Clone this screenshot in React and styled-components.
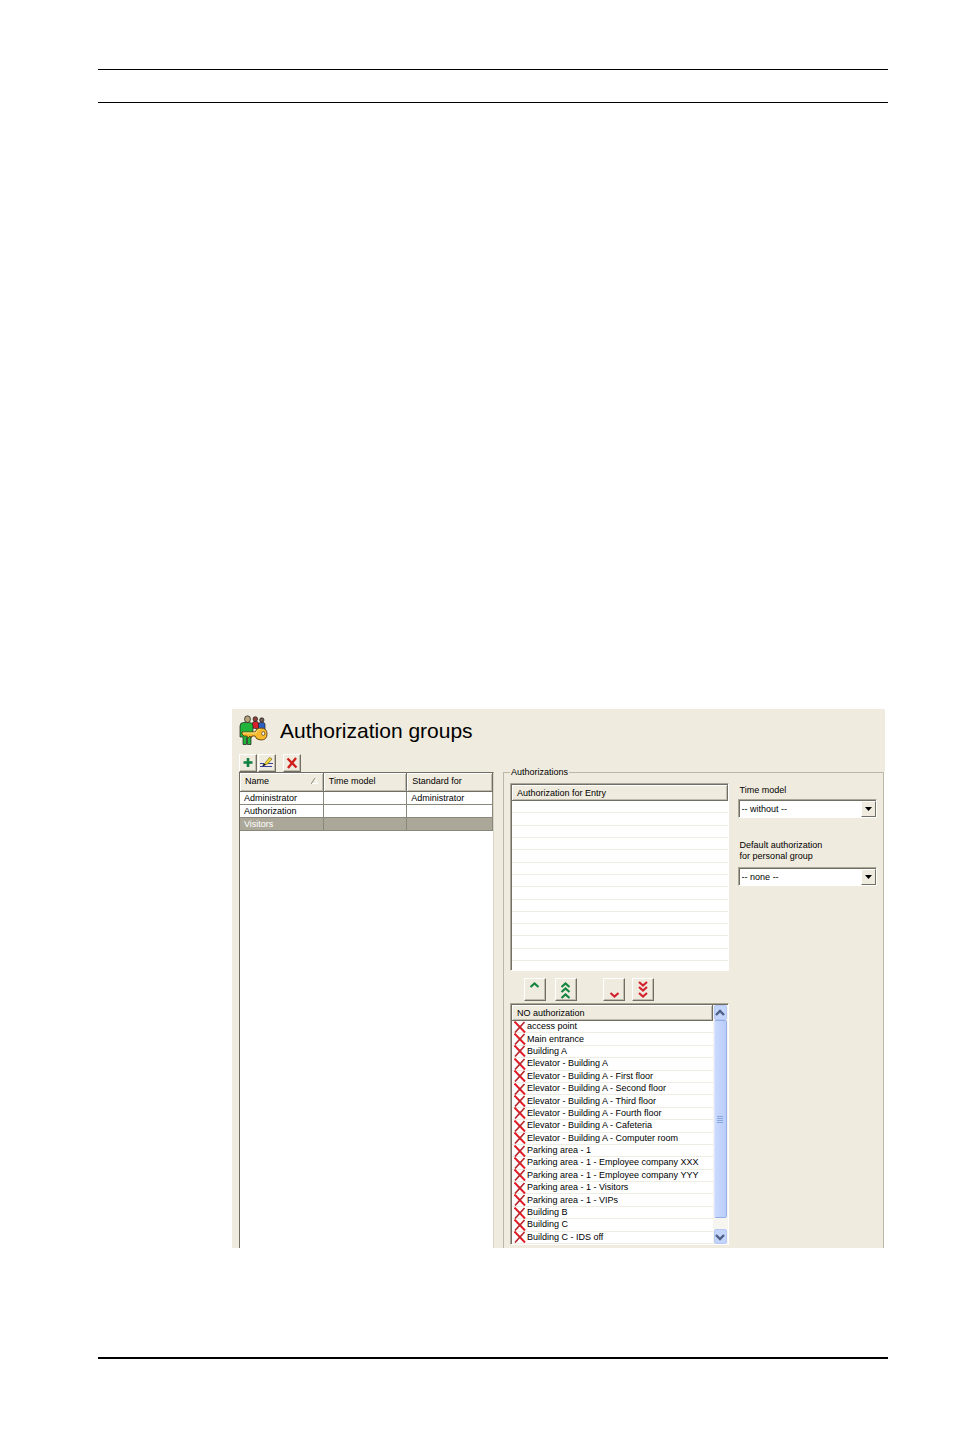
import React, { useState } from "react";
import styled, { createGlobalStyle } from "styled-components";

const GlobalStyle = createGlobalStyle`
  * {
    box-sizing: border-box;
  }
  body {
    margin: 0;
    background: #fff;
    color: #000;
    font-family: "Liberation Sans", Arial, sans-serif;
    font-size: 9px;
    line-height: 12px;
  }
  button, select {
    font: inherit;
    color: inherit;
  }
`;

const Page = styled.div`
  display: flex;
  flex-direction: column;
  min-height: 100vh;
  padding: 69px 66px 71px 98px;
`;

const PageHeader = styled.header`
  height: 34px;
  border-top: 1px solid #000;
  border-bottom: 1px solid #000;
`;

const PageFooter = styled.footer`
  border-top: 2px solid #000;
`;

const Main = styled.main`
  flex: 1;
  display: flex;
  flex-direction: column;
  justify-content: flex-end;
  padding: 0 3px 109px 134px;
`;

const Dialog = styled.section`
  background: #efebde;
  padding: 6px 1px 0 7px;
`;

const TitleBar = styled.div`
  display: flex;
  align-items: center;
  gap: 11px;
  height: 31px;
  margin-bottom: 8px;
`;

const Title = styled.h1`
  margin: 0;
  font-size: 21px;
  font-weight: normal;
  line-height: 28px;
`;

const Columns = styled.div`
  display: grid;
  grid-template-columns: 255fr 381fr;
  gap: 9px;
`;

const GroupsColumn = styled.div`
  min-width: 0;
  display: flex;
  flex-direction: column;
`;

const Toolbar = styled.div`
  display: flex;
  gap: 1px;
`;

const Button = styled.button`
  display: flex;
  align-items: center;
  justify-content: center;
  width: ${(p) => (p.$large ? 22 : 18)}px;
  height: ${(p) => (p.$large ? 23 : 18)}px;
  margin-left: ${(p) => p.$before || 0}px;
  padding: 0;
  border: 1px solid;
  border-color: #fff #716f64 #716f64 #fff;
  box-shadow: inset -1px -1px #bfbbad;
  background: #efebde;
`;

const Sunken = styled.div`
  background: #fff;
  border: 1px solid;
  border-color: #aca899 #fff #fff #aca899;
  box-shadow: inset 1px 1px #716f64;
  padding: 1px 0 0 1px;
`;

const GroupsFrame = styled.div`
  flex: 1;
  background: #fff;
  border: 1px solid #716f64;
  border-right-color: #d8d4c6;
  border-bottom: 0;
`;

const Table = styled.table`
  width: 100%;
  border-collapse: collapse;
  table-layout: fixed;
`;

const Th = styled.th`
  width: ${(p) => p.$width || "auto"};
  height: 18px;
  padding: 0 5px 2px;
  background: #efebde;
  border-right: 1px solid #716f64;
  border-bottom: 1px solid #716f64;
  box-shadow: inset 1px 1px #fff, inset -1px -1px #bfbbad;
  font-weight: normal;
  text-align: left;

  div {
    display: flex;
    align-items: center;
    justify-content: space-between;
  }
`;

const Tr = styled.tr`
  background: ${(p) => (p.$selected ? "#aca899" : "#fff")};
  color: ${(p) => (p.$selected ? "#fff" : "#000")};
`;

const Td = styled.td`
  height: 13px;
  padding: 0 4px;
  border-right: 1px solid #8a877b;
  border-bottom: 1px solid #8a877b;
`;

const Fieldset = styled.fieldset`
  min-width: 0;
  margin: 12px 0 0;
  padding: 5px 6px 3px;
  border: 1px solid #bab6a8;
  border-bottom: 0;
  box-shadow: 1px 0 #fff;
`;

const Legend = styled.legend`
  padding: 0 1px;
`;

const FieldsetBody = styled.div`
  display: grid;
  grid-template-columns: 218fr 139fr;
  gap: 9px;
`;

const Lists = styled.div`
  min-width: 0;
`;

const Options = styled.div`
  min-width: 0;
  padding-top: 2px;
`;

const ListBox = styled(Sunken)`
  display: flex;
  height: ${(p) => p.$height}px;
`;

const ListContent = styled.div`
  flex: 1;
  min-width: 0;
  display: flex;
  flex-direction: column;
`;

const ListHeader = styled.div`
  flex: none;
  height: 16px;
  padding: 2px 5px 0;
  background: #efebde;
  border-right: 1px solid #716f64;
  border-bottom: 1px solid #716f64;
  box-shadow: inset 1px 1px #fff, inset -1px -1px #bfbbad;
`;

const Items = styled.ul`
  flex: 1;
  min-height: 0;
  display: flex;
  flex-direction: column;
  margin: 0;
  padding: 0 0 ${(p) => p.$rest || 0}px;
  list-style: none;
`;

const Item = styled.li`
  flex: 1;
  min-height: 0;
  display: flex;
  align-items: center;
  gap: 1px;
  padding-left: 2px;
  border-bottom: 1px solid #efece3;
  line-height: 11px;
  white-space: nowrap;

  svg {
    flex: none;
  }
`;

const MoveButtons = styled.div`
  display: flex;
  padding: 7px 0 2px 14px;
`;

const Scrollbar = styled.div`
  width: 15px;
  display: flex;
  flex-direction: column;
  background: #f6f5f0;
  padding: 0 1px;
`;

const ScrollButton = styled.button`
  display: flex;
  align-items: center;
  justify-content: center;
  height: 15px;
  padding: 0;
  border: 1px solid #b4c8f4;
  border-radius: 2px;
  background: #c4d5fd;
`;

const Thumb = styled.div`
  flex: 1;
  display: flex;
  align-items: center;
  justify-content: center;
  margin-bottom: 11px;
  border: 1px solid #94aee8;
  border-left-color: #dbe5fe;
  border-radius: 2px;
  background: linear-gradient(to right, #cbdafe, #b9ccfa);
`;

const Field = styled.div`
  margin-bottom: ${(p) => p.$after || 0}px;
`;

const Label = styled.label`
  display: block;
  padding: 0 2px;
  margin-bottom: ${(p) => p.$gap}px;
  line-height: 11px;
`;

const SelectBox = styled(Sunken)`
  position: relative;
  height: 19px;
`;

const Select = styled.select`
  appearance: none;
  display: block;
  width: 100%;
  height: 16px;
  padding: 0 18px 0 2px;
  border: 0;
  border-radius: 0;
  background: #fff;
`;

const Arrow = styled.span`
  position: absolute;
  top: 1px;
  right: 0;
  bottom: 0;
  width: 15px;
  display: flex;
  align-items: center;
  justify-content: center;
  background: #efebde;
  border: 1px solid;
  border-color: #fff #716f64 #716f64 #fff;
  pointer-events: none;
`;

const GroupIcon = () => (
  <svg width="30" height="31" viewBox="0 0 30 31" aria-hidden="true">
    <g stroke="#1d1d1d" strokeWidth="0.7">
      <path d="M19.500 14V9.500q0-2 2-2h2.500q2 0 2 2V15z" fill="#2b5fc0" />
      <circle cx="22.800" cy="5" r="2.200" fill="#6d5a50" />
      <path d="M13.500 13V8.500q0-2 2-2h2q2 0 2 2V14z" fill="#d8202c" />
      <circle cx="16.300" cy="4" r="2.300" fill="#8d3f34" />
      <path d="M1 22V11q0-3.500 3.500-3.500h6q3.500 0 3.500 3.500v10h-2v8.500H8.500V23h-1v6.500H4V22z" fill="#20b53a" />
      <ellipse cx="8.500" cy="4.200" rx="3" ry="3.400" fill="#b3a27a" />
    </g>
    <path
      d="M3 17h13q1-4 6-4 6 0 6 6t-6 6q-5 0-6-4h-3l-1 2-1-2-2 2-1-2H5l-2-2z"
      fill="#f6b92c"
      stroke="#5e4210"
      strokeWidth="0.9"
    />
    <path d="M4 18h13q1-3 4-4" fill="none" stroke="#ffe58a" strokeWidth="1" />
    <ellipse cx="24.200" cy="18.500" rx="1.500" ry="1.900" fill="#fff" stroke="#5e4210" strokeWidth="0.8" />
  </svg>
);

const PlusIcon = () => (
  <svg width="14" height="14" viewBox="0 0 14 14" aria-hidden="true">
    <path d="M7 2v9M2.500 6.500h9" stroke="#0e8140" strokeWidth="2.600" />
  </svg>
);

const PencilIcon = () => (
  <svg width="16" height="14" viewBox="0 0 16 14" aria-hidden="true">
    <path d="M1 10.500h12M1 7.500h4M9 7.500h5" stroke="#39429a" strokeWidth="1" />
    <path d="M4.500 9l2-2.500 4-5 2.500 1.500-4.500 5z" fill="#f0d832" stroke="#7a6a18" strokeWidth="0.700" />
    <path d="M3 10.500l2-3 2 1.500z" fill="#111" />
  </svg>
);

const DeleteIcon = () => (
  <svg width="14" height="14" viewBox="0 0 14 14" aria-hidden="true">
    <path d="M2.500 2.500l9 9M11 2l-8 10" stroke="#d0201c" strokeWidth="2.400" />
  </svg>
);

const DeniedIcon = () => (
  <svg width="12" height="12" viewBox="0 0 12 12" aria-hidden="true">
    <path d="M0.500 0.500l10.500 11" stroke="#e01c26" strokeWidth="2" />
    <path d="M10.500 1L1 11.500" stroke="#b8282e" strokeWidth="1.700" />
  </svg>
);

const chevrons = {
  up: ["M5.500 7l4-3.500 4 3.500"],
  upAll: ["M5.500 7l4-3.500 4 3.500", "M5.500 12l4-3.500 4 3.500", "M5.500 18l4-3.500 4 3.500"],
  down: ["M6.500 13l4 3.500 4-3.500"],
  downAll: ["M6 2l4 3.500 4-3.500", "M6 7l4 3.500 4-3.500", "M6 13l4 3.500 4-3.500"],
};

const MoveIcon = ({ kind }) => (
  <svg width="20" height="20" viewBox="0 0 20 20" aria-hidden="true">
    {chevrons[kind].map((d) => (
      <path
        key={d}
        d={d}
        fill="none"
        stroke={kind.startsWith("up") ? "#158541" : "#d3222f"}
        strokeWidth="2.200"
      />
    ))}
  </svg>
);

const ScrollIcon = ({ down }) => (
  <svg width="10" height="8" viewBox="0 0 10 8" aria-hidden="true">
    <path d={down ? "M1 2L5 6 9 2" : "M1 6L5 2 9 6"} fill="none" stroke="#4d6185" strokeWidth="2.400" />
  </svg>
);

const groups = [
  { name: "Administrator", timeModel: "", standardFor: "Administrator" },
  { name: "Authorization", timeModel: "", standardFor: "" },
  { name: "Visitors", timeModel: "", standardFor: "" },
];

const denied = [
  "access point",
  "Main entrance",
  "Building A",
  "Elevator - Building A",
  "Elevator - Building A - First floor",
  "Elevator - Building A - Second floor",
  "Elevator - Building A - Third floor",
  "Elevator - Building A - Fourth floor",
  "Elevator - Building A - Cafeteria",
  "Elevator - Building A - Computer room",
  "Parking area - 1",
  "Parking area - 1 - Employee company XXX",
  "Parking area - 1 - Employee company YYY",
  "Parking area - 1 - Visitors",
  "Parking area - 1 - VIPs",
  "Building B",
  "Building C",
  "Building C - IDS off",
];

const emptyRows = Array.from({ length: 13 }, (_, i) => i);

const Dropdown = ({ id, label, gap, after, option }) => (
  <Field $after={after}>
    <Label htmlFor={id} $gap={gap}>{label}</Label>
    <SelectBox>
      <Select id={id}>
        <option>{option}</option>
      </Select>
      <Arrow>
        <svg width="7" height="4" viewBox="0 0 7 4" aria-hidden="true">
          <path d="M0 0h7L3.500 4z" fill="#000" />
        </svg>
      </Arrow>
    </SelectBox>
  </Field>
);

const App = () => {
  const [selected, setSelected] = useState("Visitors");

  return (
    <Page>
      <GlobalStyle />
      <PageHeader />
      <Main>
        <Dialog>
          <TitleBar>
            <GroupIcon />
            <Title>Authorization groups</Title>
          </TitleBar>
          <Columns>
            <GroupsColumn>
              <Toolbar>
                <Button aria-label="Add"><PlusIcon /></Button>
                <Button aria-label="Edit"><PencilIcon /></Button>
                <Button aria-label="Delete" $before={6}><DeleteIcon /></Button>
              </Toolbar>
              <GroupsFrame>
                <Table>
                  <thead>
                    <tr>
                      <Th $width="33%">
                        <div>
                          Name
                          <svg width="7" height="6" viewBox="0 0 7 6" aria-hidden="true">
                            <path d="M3.500 0.500L6.500 5.500H0" stroke="#fff" fill="none" />
                            <path d="M0 6L4 0" stroke="#8a877b" />
                          </svg>
                        </div>
                      </Th>
                      <Th $width="33%">Time model</Th>
                      <Th>Standard for</Th>
                    </tr>
                  </thead>
                  <tbody>
                    {groups.map((g) => (
                      <Tr key={g.name} $selected={g.name === selected} onClick={() => setSelected(g.name)}>
                        <Td>{g.name}</Td>
                        <Td>{g.timeModel}</Td>
                        <Td>{g.standardFor}</Td>
                      </Tr>
                    ))}
                  </tbody>
                </Table>
              </GroupsFrame>
            </GroupsColumn>
            <Fieldset>
              <Legend>Authorizations</Legend>
              <FieldsetBody>
                <Lists>
                  <ListBox $height={188}>
                    <ListContent>
                      <ListHeader>Authorization for Entry</ListHeader>
                      <Items $rest={9}>
                        {emptyRows.map((i) => <Item key={i} />)}
                      </Items>
                    </ListContent>
                  </ListBox>
                  <MoveButtons>
                    <Button $large aria-label="Assign"><MoveIcon kind="up" /></Button>
                    <Button $large $before={9} aria-label="Assign all"><MoveIcon kind="upAll" /></Button>
                    <Button $large $before={26} aria-label="Remove"><MoveIcon kind="down" /></Button>
                    <Button $large $before={7} aria-label="Remove all"><MoveIcon kind="downAll" /></Button>
                  </MoveButtons>
                  <ListBox $height={242}>
                    <ListContent>
                      <ListHeader>NO authorization</ListHeader>
                      <Items>
                        {denied.map((name) => (
                          <Item key={name}>
                            <DeniedIcon />
                            {name}
                          </Item>
                        ))}
                      </Items>
                    </ListContent>
                    <Scrollbar>
                      <ScrollButton aria-label="Scroll up"><ScrollIcon /></ScrollButton>
                      <Thumb>
                        <svg width="6" height="7" viewBox="0 0 6 7" aria-hidden="true">
                          <path d="M0 0.500h6M0 2.500h6M0 4.500h6M0 6.500h6" stroke="#8ca6e0" />
                        </svg>
                      </Thumb>
                      <ScrollButton aria-label="Scroll down"><ScrollIcon down /></ScrollButton>
                    </Scrollbar>
                  </ListBox>
                </Lists>
                <Options>
                  <Dropdown id="time-model" label="Time model" gap={3} after={22} option="-- without --" />
                  <Dropdown
                    id="default-authorization"
                    label={<>Default authorization<br />for personal group</>}
                    gap={5}
                    option="-- none --"
                  />
                </Options>
              </FieldsetBody>
            </Fieldset>
          </Columns>
        </Dialog>
      </Main>
      <PageFooter />
    </Page>
  );
};

export default App;
